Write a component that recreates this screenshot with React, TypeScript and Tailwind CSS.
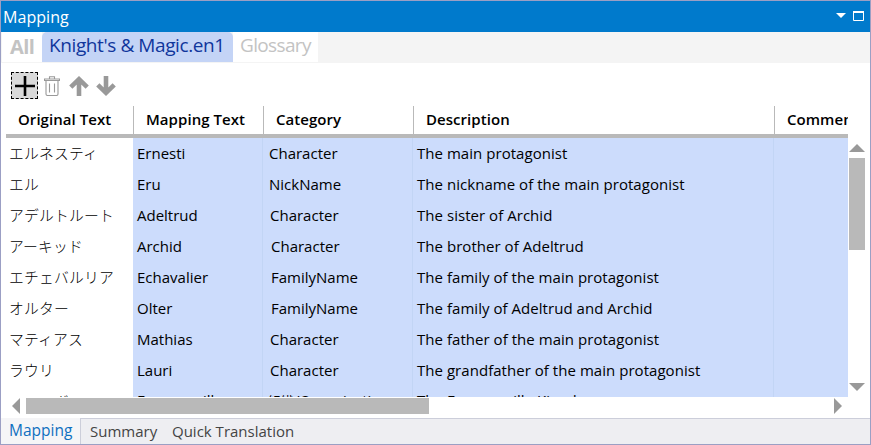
import React from "react";

const columns = [
  { name: "Original Text", width: "w-[128px]", pad: "pl-3" },
  { name: "Mapping Text", width: "w-[130px]", pad: "pl-[12px]" },
  { name: "Category", width: "w-[150px]", pad: "pl-[12px]" },
  { name: "Description", width: "w-[361px]", pad: "pl-[12px]" },
  { name: "Comment", width: "w-[139px]", pad: "pl-[12px]" },
];

const rows = [
  ["エルネスティ", "Ernesti", "Character", "The main protagonist", "pl-[6px]"],
  ["エル", "Eru", "NickName", "The nickname of the main protagonist", "pl-[6px]"],
  ["アデルトルート", "Adeltrud", "Character", "The sister of Archid", "pl-[7px]"],
  ["アーキッド", "Archid", "Character", "The brother of Adeltrud", "pl-[8px]"],
  ["エチェバルリア", "Echavalier", "FamilyName", "The family of the main protagonist", "pl-[8px]"],
  ["オルター", "Olter", "FamilyName", "The family of Adeltrud and Archid", "pl-[8px]"],
  ["マティアス", "Mathias", "Character", "The father of the main protagonist", "pl-[7px]"],
  ["ラウリ", "Lauri", "Character", "The grandfather of the main protagonist", "pl-[7px]"],
  ["フレメヴィーラ", "Fremmevilla", "組織/Organization", "The Fremmevilla Kingdom", "pl-[5px]"],
];

function Arrow({ down = false }: { down?: boolean }) {
  return (
    <svg viewBox="0 0 20 20" className={down ? "h-5 w-5 rotate-180" : "h-5 w-5"}>
      <path d="M10 20V4M1.800 11.200l8.200-8 8.200 8" fill="none" stroke="#999" strokeWidth="4.6" />
    </svg>
  );
}

export default function App() {
  return (
    <div className="flex h-[445px] w-[871px] flex-col overflow-hidden border border-[#9b9fc4] bg-white font-['Open_Sans','Noto_Sans_CJK_JP',sans-serif] text-black">
      <header className="flex h-[31px] shrink-0 items-center bg-[#007acc] pr-[6px] pl-[2px] text-white">
        <span className="text-[16px] tracking-[0.05px]">Mapping</span>
        <svg viewBox="0 0 28 12" className="ml-auto h-3 w-7">
          <path d="M0 2h10L5 7z" fill="#fff" />
          <path d="M17.5 1v8.500h10V1" fill="none" stroke="#fff" />
          <path d="M17 1h11" stroke="#fff" strokeWidth="2" />
        </svg>
      </header>
      <nav className="flex h-[31px] shrink-0 border-b border-[#f4f4f4] bg-[#f4f4f4] pl-[1px] text-[19px] leading-[26px]">
        <div className="w-[40px] bg-white pt-[2px] pl-[8px] text-[20px] font-bold tracking-[-0.6px] text-[#c3c3c3]">All</div>
        <div className="w-[191px] rounded-t-[5px] bg-[#c4d4f6] pl-[7px] tracking-[-0.4px] whitespace-nowrap text-[#10369c]">Knight's &amp; Magic.en1</div>
        <div className="w-[85px] bg-white pl-[7px] tracking-[-0.65px] text-[#c3c3c3]">Glossary</div>
      </nav>
      <div className="flex h-[43px] shrink-0 items-start pt-[9px] pl-[10px]">
        <div className="flex h-[27px] w-[27px] items-center justify-center border border-dashed border-black bg-[#dadada]">
          <svg viewBox="0 0 20 20" className="h-5 w-5">
            <path d="M0 10h20M10 0v20" stroke="#000" strokeWidth="2.6" />
          </svg>
        </div>
        <svg viewBox="0 0 16 20" className="mt-[4px] ml-[6px] h-5 w-4" fill="none" stroke="#999" strokeWidth="1.1">
          <path d="M.5 4.500V3h15v1.500H.5ZM5.500 3V.8h5V3M2 5v13q0 1.500 1.500 1.500h9Q14 19.500 14 18V5M5.500 7.500v9M10.500 7.500v9" />
        </svg>
        <div className="mt-[4px] ml-[9px]"><Arrow /></div>
        <div className="mt-[4px] ml-[7px]"><Arrow down /></div>
      </div>
      <main className="flex h-[291px] shrink-0 pl-[5px]">
        <section className="h-[291px] w-[842px] overflow-hidden">
          <div className="flex h-[32px] w-[908px] border-b-4 border-[#b9b9b9]">
            {columns.map((c, i) => (
              <div key={c.name} className={`${c.width} ${c.pad} ${i < 4 ? "border-r border-[#b9b9b9]" : ""} h-[28px] shrink-0 text-[15px] leading-[27px] font-semibold tracking-[0.05px] whitespace-nowrap`}>
                {c.name}
              </div>
            ))}
          </div>
          {rows.map((r, i) => (
            <div key={r[0]} className={`flex h-[31px] w-[908px] text-[15px] whitespace-nowrap ${i === 8 ? "leading-[29px]" : "leading-[31px]"}`}>
              <div className={`w-[127px] shrink-0 pl-[3px] text-[14.800px] font-light tracking-[0.2px] ${i === 8 ? "leading-[32px]" : ""}`}>{r[0]}</div>
              <div className="w-[130px] shrink-0 border-r border-[#c2d5f5] bg-[#ccdcfc] pl-[4px]">{r[1]}</div>
              <div className={`${r[4]} w-[150px] shrink-0 border-r border-[#c2d5f5] bg-[#ccdcfc]`}>
                {i === 8 ? (
                  <>
                    <span className="text-[13px]">{r[2].slice(0, 2)}</span>
                    {r[2].slice(2)}
                  </>
                ) : (
                  r[2]
                )}
              </div>
              <div className="w-[361px] shrink-0 border-r border-[#c2d5f5] bg-[#ccdcfc] pl-[4px] tracking-[0.04px]">{r[3]}</div>
              <div className="w-[140px] shrink-0 bg-[#ccdcfc]" />
            </div>
          ))}
        </section>
        <aside className="flex w-[17px] flex-col items-center pt-[38px]">
          <svg viewBox="0 0 16 8" className="h-2 w-4"><path d="M0 8L8 0l8 8z" fill="#999" /></svg>
          <div className="mt-[6px] h-[92px] w-[16px] bg-[#b9b9b9]" />
          <svg viewBox="0 0 16 8" className="mt-auto mb-[6px] h-2 w-4"><path d="M0 0h16L8 8z" fill="#999" /></svg>
        </aside>
      </main>
      <div className="flex h-[21px] shrink-0 items-start pt-px pl-[11px]">
        <svg viewBox="0 0 8 16" className="h-4 w-2"><path d="M8 0v16L0 8z" fill="#999" /></svg>
        <div className="ml-[6px] h-4 w-[403px] bg-[#b9b9b9]" />
        <svg viewBox="0 0 8 16" className="ml-[405px] h-4 w-2"><path d="M0 0v16l8-8z" fill="#999" /></svg>
      </div>
      <footer className="flex h-[26px] shrink-0 bg-[#eeeef2] text-[15px] leading-[25px] whitespace-nowrap text-[#444]">
        <div className="w-[80px] border-r border-[#ccceda] bg-[#f5f5f7] pl-[8px] text-[15.500px] text-[#0e70c0]">Mapping</div>
        <div className="w-[82px] border-t border-[#ccceda] pl-[9px]">Summary</div>
        <div className="grow border-t border-[#ccceda] pl-[9px]">Quick Translation</div>
      </footer>
    </div>
  );
}
